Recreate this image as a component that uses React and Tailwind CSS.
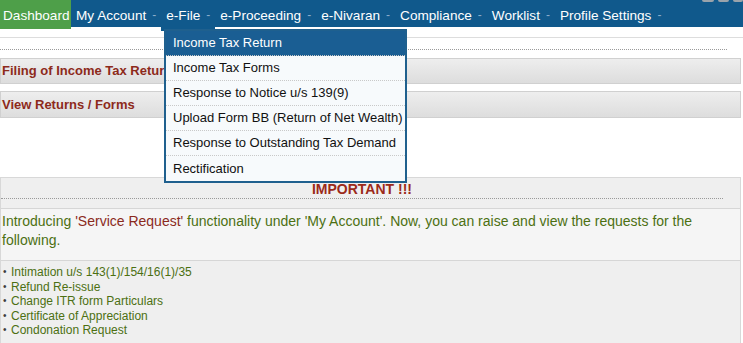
import React from 'react';

const navItems = ['My Account', 'e-File', 'e-Proceeding', 'e-Nivaran', 'Compliance', 'Worklist', 'Profile Settings'];

const menuItems = [
  'Income Tax Return',
  'Income Tax Forms',
  'Response to Notice u/s 139(9)',
  'Upload Form BB (Return of Net Wealth)',
  'Response to Outstanding Tax Demand',
  'Rectification',
];

const requests = [
  'Intimation u/s 143(1)/154/16(1)/35',
  'Refund Re-issue',
  'Change ITR form Particulars',
  'Certificate of Appreciation',
  'Condonation Request',
];

function NavItem({ label, active }) {
  return (
    <div
      className={`flex pl-[5px] pr-[5px] pt-[4px] leading-[23px] text-white ${
        active ? 'h-[31px] bg-[#10598c]' : 'h-[27px]'
      }`}
    >
      <span>{label}</span>
      <span className="ml-[6px] text-[12px] text-[#8aaecb]">-</span>
    </div>
  );
}

export default function App() {
  return (
    <div className="relative w-[743px] h-[343px] overflow-hidden bg-white font-['Liberation_Sans',Arial,sans-serif] text-[13px]">
      {/* Top nav */}
      <div className="flex h-[27px] items-start bg-[#10598c] text-[13.6px]">
        <div className="h-[29px] w-[71px] bg-[#4e9f49] pl-[3px] pt-[4px] leading-[23px] text-white">Dashboard</div>
        {navItems.map((item) => (
          <NavItem key={item} label={item} active={item === 'e-File'} />
        ))}
      </div>

      {/* bits of header icons cut off at the top */}
      <div className="absolute right-0 top-0 flex gap-[4px]">
        <div className="h-[2px] w-[12px] rounded-b bg-[#9aa3ab]" />
        <div className="h-[2px] w-[11px] rounded-b bg-[#9aa3ab]" />
        <div className="h-[2px] w-[10px] rounded-b bg-[#9aa3ab]" />
      </div>

      <div className="mt-[10px] h-px bg-[#dddddd]" />
      <div className="mt-[11px] w-[727px] border-t border-dotted border-[#9a9a9a]" />

      <div className="mt-[8px] flex h-[26px] w-[741px] items-center border border-[#d0d0d0] bg-gradient-to-b from-[#eeeeee] to-[#dddddd] pl-px text-[13px] font-bold text-[#8d2a1b]">
        Filing of Income Tax Return
      </div>
      <div className="mt-[7px] flex h-[27px] w-[741px] items-center border border-[#d0d0d0] bg-gradient-to-b from-[#eeeeee] to-[#dddddd] pl-px text-[13px] font-bold text-[#8d2a1b]">
        View Returns / Forms
      </div>

      {/* Important notice */}
      <div className="mt-[59px] h-[200px] w-[741px] border border-[#d8d8d8] bg-[#efefef]">
        <div className="w-[722px] border-b border-dotted border-[#9a9a9a] pt-[3px] text-center text-[14px] font-bold leading-[17px] text-[#9b2a1a]">
          IMPORTANT !!!
        </div>
        <div className="mt-[9px] border-y border-[#d6d6d6] bg-[#f5f5f5] pb-[10px] pl-px pt-[3px] text-[14px] leading-[19px] text-[#4c7012]">
          Introducing <span className="text-[#8b2a1c]">'Service Request'</span> functionality under 'My Account'. Now, you can
          raise and view the requests for the following.
        </div>
        <ul className="pt-[4px] text-[12px] leading-[14.5px] text-[#4c7012]">
          {requests.map((r) => (
            <li key={r} className="flex">
              <span className="w-[10px] pl-[2px] text-[10px] text-[#3d3d3d]">•</span>
              <span>{r}</span>
            </li>
          ))}
        </ul>
      </div>

      {/* e-File dropdown */}
      <div className="absolute left-[164px] top-[29px] w-[243px] border-2 border-[#1f608e] bg-[#f7fafc]">
        {menuItems.map((m, i) => (
          <div
            key={m}
            className={`flex h-[25px] items-center pl-[7px] text-[13px] ${
              i === 0 ? 'bg-[#1a5e93] text-white' : 'text-[#111111]'
            } ${i < menuItems.length - 1 ? 'border-b border-dotted border-[#c9c9c9]' : ''}`}
          >
            {m}
          </div>
        ))}
      </div>
    </div>
  );
}
